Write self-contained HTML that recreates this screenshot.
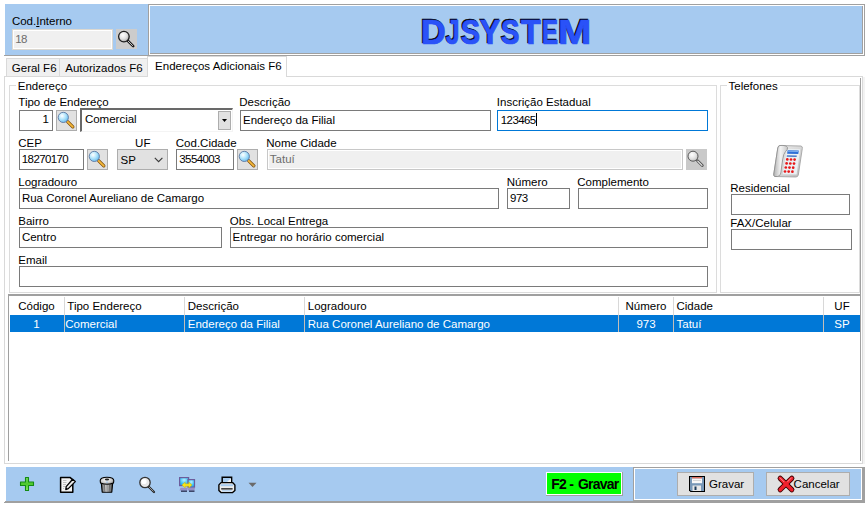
<!DOCTYPE html>
<html><head><meta charset="utf-8"><style>
html,body{margin:0;padding:0;width:868px;height:508px;overflow:hidden;background:#fff;position:relative}
body div{position:absolute;box-sizing:border-box}
svg{position:absolute}
.t{white-space:nowrap;font-family:"Liberation Sans",sans-serif;color:#000;}
</style></head><body>
<div style="left:5px;top:4px;width:143px;height:51px;background:#a6caf0"></div>
<div style="left:4px;top:55px;width:861px;height:1px;background:#a0a0a0"></div>
<div style="left:148px;top:4px;width:717px;height:52px;border:1px solid #a0a0a0;box-sizing:border-box;background:#fff"></div>
<div style="left:149px;top:5px;width:714px;height:49px;border:1px solid #fff;border-right:0;border-bottom:0;box-sizing:border-box"></div>
<div style="left:150px;top:6px;width:713px;height:48px;background:#a6caf0;border-right:1px solid #a0a0a0;border-bottom:1px solid #a0a0a0;box-sizing:border-box"></div>
<div class="t" style="left:11.90px;top:14px;font-size:11.5px;line-height:14px;">Cod.<span style="text-decoration:underline">I</span>nterno</div>
<div style="left:12px;top:29px;width:101px;height:21px;background:#f0f0f0;border:1px solid #dcd8d0;box-shadow:inset 0 0 0 1px #fff;box-sizing:border-box"></div>
<div class="t" style="left:15.30px;top:32px;font-size:11.5px;line-height:14px;color:#6d6d6d;letter-spacing:-0.6px">18</div>
<div style="left:116px;top:29px;width:21px;height:20px;background:#cccccc;"><div style="left:0;top:0"><svg width="21" height="21" viewBox="0 0 21 21"><defs><radialGradient id="gg" cx="0.4" cy="0.35" r="0.75"><stop offset="0" stop-color="#ffffff"/><stop offset="0.5" stop-color="#e0e0e0"/><stop offset="1" stop-color="#9a9a9a"/></radialGradient></defs><line x1="11.5" y1="11.5" x2="17.2" y2="17.2" stroke="#1a1a1a" stroke-width="2.6" stroke-linecap="round"/><line x1="12" y1="12" x2="16.6" y2="16.6" stroke="#d8d8d8" stroke-width="0.9" stroke-linecap="round"/><circle cx="7.9" cy="7.6" r="5.3" fill="url(#gg)" stroke="#1e1e1e" stroke-width="1.3"/></svg></div></div>
<div class="t" style="left:420.04px;top:11px;font-size:35px;line-height:40px;font-weight:bold;color:#000;-webkit-text-stroke:0.7px #000;transform:scaleX(0.982);transform-origin:0 0">D</div>
<div class="t" style="left:445.30px;top:11px;font-size:35px;line-height:40px;font-weight:bold;color:#000;-webkit-text-stroke:0.7px #000;transform:scaleX(0.694);transform-origin:0 0">J</div>
<div class="t" style="left:459.78px;top:11px;font-size:35px;line-height:40px;font-weight:bold;color:#000;-webkit-text-stroke:0.7px #000;transform:scaleX(0.819);transform-origin:0 0">S</div>
<div class="t" style="left:479.20px;top:11px;font-size:35px;line-height:40px;font-weight:bold;color:#000;-webkit-text-stroke:0.7px #000;transform:scaleX(0.870);transform-origin:0 0">Y</div>
<div class="t" style="left:500.20px;top:11px;font-size:35px;line-height:40px;font-weight:bold;color:#000;-webkit-text-stroke:0.7px #000;transform:scaleX(0.795);transform-origin:0 0">S</div>
<div class="t" style="left:519.50px;top:11px;font-size:35px;line-height:40px;font-weight:bold;color:#000;-webkit-text-stroke:0.7px #000;transform:scaleX(0.929);transform-origin:0 0">T</div>
<div class="t" style="left:540.72px;top:11px;font-size:35px;line-height:40px;font-weight:bold;color:#000;-webkit-text-stroke:0.7px #000;transform:scaleX(0.690);transform-origin:0 0">E</div>
<div class="t" style="left:556.81px;top:11px;font-size:35px;line-height:40px;font-weight:bold;color:#000;-webkit-text-stroke:0.7px #000;transform:scaleX(1.144);transform-origin:0 0">M</div>
<div class="t" style="left:421.04px;top:12px;font-size:35px;line-height:40px;font-weight:bold;color:#2a52f8;-webkit-text-stroke:0.7px #2a52f8;transform:scaleX(0.982);transform-origin:0 0">D</div>
<div class="t" style="left:446.30px;top:12px;font-size:35px;line-height:40px;font-weight:bold;color:#2a52f8;-webkit-text-stroke:0.7px #2a52f8;transform:scaleX(0.694);transform-origin:0 0">J</div>
<div class="t" style="left:460.78px;top:12px;font-size:35px;line-height:40px;font-weight:bold;color:#2a52f8;-webkit-text-stroke:0.7px #2a52f8;transform:scaleX(0.819);transform-origin:0 0">S</div>
<div class="t" style="left:480.20px;top:12px;font-size:35px;line-height:40px;font-weight:bold;color:#2a52f8;-webkit-text-stroke:0.7px #2a52f8;transform:scaleX(0.870);transform-origin:0 0">Y</div>
<div class="t" style="left:501.20px;top:12px;font-size:35px;line-height:40px;font-weight:bold;color:#2a52f8;-webkit-text-stroke:0.7px #2a52f8;transform:scaleX(0.795);transform-origin:0 0">S</div>
<div class="t" style="left:520.50px;top:12px;font-size:35px;line-height:40px;font-weight:bold;color:#2a52f8;-webkit-text-stroke:0.7px #2a52f8;transform:scaleX(0.929);transform-origin:0 0">T</div>
<div class="t" style="left:541.72px;top:12px;font-size:35px;line-height:40px;font-weight:bold;color:#2a52f8;-webkit-text-stroke:0.7px #2a52f8;transform:scaleX(0.690);transform-origin:0 0">E</div>
<div class="t" style="left:557.81px;top:12px;font-size:35px;line-height:40px;font-weight:bold;color:#2a52f8;-webkit-text-stroke:0.7px #2a52f8;transform:scaleX(1.144);transform-origin:0 0">M</div>
<div style="left:4px;top:76px;width:859px;height:388px;border:1px solid #d9d9d9;box-sizing:border-box;background:#fff"></div>
<div style="left:863px;top:77px;width:2px;height:387px;background:#f3f3f3"></div>
<div style="left:6px;top:58px;width:54px;height:19px;background:#f0f0f0;border:1px solid #d9d9d9;box-sizing:border-box"></div>
<div style="left:59px;top:58px;width:89px;height:19px;background:#f0f0f0;border:1px solid #d9d9d9;box-sizing:border-box"></div>
<div style="left:147px;top:56px;width:140px;height:21px;background:#fff;border:1px solid #d9d9d9;border-bottom:0;box-sizing:border-box"></div>
<div class="t" style="left:11.80px;top:61px;font-size:11.5px;line-height:14px;">Geral F6</div>
<div class="t" style="left:65.30px;top:61px;font-size:11.5px;line-height:14px;">Autorizados F6</div>
<div class="t" style="left:155.10px;top:59px;font-size:11.5px;line-height:14px;">Endereços Adicionais F6</div>
<div style="left:9px;top:85px;width:708px;height:208px;border:1px solid #dcdcdc;box-sizing:border-box"></div>
<div class="t" style="left:15.80px;top:79px;font-size:11.5px;line-height:14px;background:#fff;padding:0 2px">Endereço</div>
<div style="left:720px;top:85px;width:140px;height:208px;border:1px solid #dcdcdc;box-sizing:border-box"></div>
<div class="t" style="left:726.50px;top:79px;font-size:11.5px;line-height:14px;background:#fff;padding:0 2px">Telefones</div>
<div style="left:860px;top:78px;width:1px;height:383px;background:#a0a0a0"></div>
<div class="t" style="left:18.30px;top:95px;font-size:11.5px;line-height:14px;">Tipo de Endereço</div>
<div class="t" style="left:239.30px;top:95px;font-size:11.5px;line-height:14px;">Descrição</div>
<div class="t" style="left:496.80px;top:95px;font-size:11.5px;line-height:14px;">Inscrição Estadual</div>
<div style="left:19px;top:110px;width:34px;height:21px;border:1px solid #7a7a7a;background:#fff;"></div>
<div class="t" style="right:819px;top:112px;font-size:11.5px;line-height:14px;">1</div>
<div style="left:56px;top:110px;width:21px;height:21px;background:#e1e1e1;border:1px solid #adadad;box-sizing:border-box"><div style="left:-1px;top:-1px"><svg width="21" height="21" viewBox="0 0 21 21"><defs><radialGradient id="gl1" cx="0.38" cy="0.35" r="0.75"><stop offset="0" stop-color="#ffffff"/><stop offset="0.45" stop-color="#b4e6fc"/><stop offset="1" stop-color="#5ab4ec"/></radialGradient></defs><line x1="11.8" y1="11.8" x2="16.8" y2="16.8" stroke="#7a4a08" stroke-width="3.3" stroke-linecap="round"/><line x1="11.8" y1="11.8" x2="16.8" y2="16.8" stroke="#f4b83a" stroke-width="1.9" stroke-linecap="round"/><circle cx="7.3" cy="7.4" r="5.1" fill="url(#gl1)" stroke="#5a76a0" stroke-width="0.9"/></svg></div></div>
<div style="left:80px;top:108px;width:153px;height:24px;border-top:2px solid #696969;border-left:2px solid #696969;border-right:1px solid #f4f4f4;border-bottom:1px solid #f4f4f4;box-sizing:border-box;background:#fff"></div>
<div class="t" style="left:84.90px;top:112px;font-size:11.5px;line-height:14px;">Comercial</div>
<div style="left:218px;top:111px;width:13px;height:19px;background:#e1e1e1;border:1px solid #adadad;box-sizing:border-box"></div>
<svg style="position:absolute;left:222px;top:119px" width="5" height="3" viewBox="0 0 5 3"><path d="M0 0 L5 0 L2.5 3 Z" fill="#000"/></svg>
<div style="left:240px;top:110px;width:251px;height:21px;border:1px solid #7a7a7a;background:#fff;"></div>
<div class="t" style="left:243.00px;top:113px;font-size:11.5px;line-height:14px;">Endereço da Filial</div>
<div style="left:497px;top:110px;width:211px;height:21px;border:1px solid #7a7a7a;background:#fff;border-color:#0078d7"></div>
<div class="t" style="left:500.80px;top:113px;font-size:11.5px;line-height:14px;letter-spacing:-0.6px">123465</div>
<div style="left:536px;top:113px;width:1px;height:13px;background:#000"></div>
<div class="t" style="left:18.30px;top:136px;font-size:11.5px;line-height:14px;">CEP</div>
<div class="t" style="left:135.10px;top:136px;font-size:11.5px;line-height:14px;">UF</div>
<div class="t" style="left:175.80px;top:136px;font-size:11.5px;line-height:14px;">Cod.Cidade</div>
<div class="t" style="left:266.30px;top:136px;font-size:11.5px;line-height:14px;">Nome Cidade</div>
<div style="left:19px;top:149px;width:65px;height:21px;border:1px solid #7a7a7a;background:#fff;"></div>
<div class="t" style="left:21.80px;top:152px;font-size:11.5px;line-height:14px;letter-spacing:-0.6px">18270170</div>
<div style="left:87px;top:149px;width:21px;height:21px;background:#e1e1e1;border:1px solid #adadad;box-sizing:border-box"><div style="left:-1px;top:-1px"><svg width="21" height="21" viewBox="0 0 21 21"><defs><radialGradient id="gl2" cx="0.38" cy="0.35" r="0.75"><stop offset="0" stop-color="#ffffff"/><stop offset="0.45" stop-color="#b4e6fc"/><stop offset="1" stop-color="#5ab4ec"/></radialGradient></defs><line x1="11.8" y1="11.8" x2="16.8" y2="16.8" stroke="#7a4a08" stroke-width="3.3" stroke-linecap="round"/><line x1="11.8" y1="11.8" x2="16.8" y2="16.8" stroke="#f4b83a" stroke-width="1.9" stroke-linecap="round"/><circle cx="7.3" cy="7.4" r="5.1" fill="url(#gl2)" stroke="#5a76a0" stroke-width="0.9"/></svg></div></div>
<div style="left:117px;top:149px;width:51px;height:21px;background:#e1e1e1;border:1px solid #adadad;box-sizing:border-box"></div>
<div class="t" style="left:120.60px;top:153px;font-size:11.5px;line-height:14px;">SP</div>
<svg style="position:absolute;left:154px;top:157px" width="10" height="6" viewBox="0 0 10 6"><path d="M0.8 0.8 L4.6 4.6 L8.4 0.8" fill="none" stroke="#3a3a3a" stroke-width="1.15"/></svg>
<div style="left:176px;top:149px;width:58px;height:21px;border:1px solid #7a7a7a;background:#fff;"></div>
<div class="t" style="left:179.30px;top:152px;font-size:11.5px;line-height:14px;letter-spacing:-0.6px">3554003</div>
<div style="left:237px;top:149px;width:21px;height:21px;background:#e1e1e1;border:1px solid #adadad;box-sizing:border-box"><div style="left:-1px;top:-1px"><svg width="21" height="21" viewBox="0 0 21 21"><defs><radialGradient id="gl3" cx="0.38" cy="0.35" r="0.75"><stop offset="0" stop-color="#ffffff"/><stop offset="0.45" stop-color="#b4e6fc"/><stop offset="1" stop-color="#5ab4ec"/></radialGradient></defs><line x1="11.8" y1="11.8" x2="16.8" y2="16.8" stroke="#7a4a08" stroke-width="3.3" stroke-linecap="round"/><line x1="11.8" y1="11.8" x2="16.8" y2="16.8" stroke="#f4b83a" stroke-width="1.9" stroke-linecap="round"/><circle cx="7.3" cy="7.4" r="5.1" fill="url(#gl3)" stroke="#5a76a0" stroke-width="0.9"/></svg></div></div>
<div style="left:267px;top:149px;width:416px;height:21px;background:#f0f0f0;border:1px solid #c8c8c8;box-shadow:inset 0 0 0 1px #fff;box-sizing:border-box"></div>
<div class="t" style="left:269.80px;top:152px;font-size:11.5px;line-height:14px;color:#6d6d6d">Tatuí</div>
<div style="left:686px;top:149px;width:21px;height:21px;background:#c9c9c9;"><div style="left:0;top:0"><svg width="21" height="21" viewBox="0 0 21 21"><defs><radialGradient id="gd" cx="0.4" cy="0.35" r="0.75"><stop offset="0" stop-color="#ffffff"/><stop offset="0.5" stop-color="#e4e4e4"/><stop offset="1" stop-color="#b8b8b8"/></radialGradient></defs><line x1="11.5" y1="11.8" x2="16.3" y2="16.6" stroke="#505050" stroke-width="2.8" stroke-linecap="round"/><line x1="11.8" y1="12.1" x2="16" y2="16.3" stroke="#e8e8e8" stroke-width="1.2" stroke-linecap="round"/><circle cx="7" cy="7.2" r="5" fill="url(#gd)" stroke="#585858" stroke-width="1"/></svg></div></div>
<div class="t" style="left:18.30px;top:175px;font-size:11.5px;line-height:14px;">Logradouro</div>
<div class="t" style="left:506.80px;top:175px;font-size:11.5px;line-height:14px;">Número</div>
<div class="t" style="left:577.30px;top:175px;font-size:11.5px;line-height:14px;">Complemento</div>
<div style="left:19px;top:188px;width:480px;height:21px;border:1px solid #7a7a7a;background:#fff;"></div>
<div class="t" style="left:21.90px;top:191px;font-size:11.5px;line-height:14px;">Rua Coronel Aureliano de Camargo</div>
<div style="left:507px;top:188px;width:63px;height:21px;border:1px solid #7a7a7a;background:#fff;"></div>
<div class="t" style="left:510.10px;top:191px;font-size:11.5px;line-height:14px;letter-spacing:-0.6px">973</div>
<div style="left:578px;top:188px;width:130px;height:21px;border:1px solid #7a7a7a;background:#fff;"></div>
<div class="t" style="left:18.30px;top:214px;font-size:11.5px;line-height:14px;">Bairro</div>
<div class="t" style="left:229.80px;top:214px;font-size:11.5px;line-height:14px;">Obs. Local Entrega</div>
<div style="left:19px;top:227px;width:203px;height:21px;border:1px solid #7a7a7a;background:#fff;"></div>
<div class="t" style="left:21.90px;top:230px;font-size:11.5px;line-height:14px;">Centro</div>
<div style="left:230px;top:227px;width:478px;height:21px;border:1px solid #7a7a7a;background:#fff;"></div>
<div class="t" style="left:232.60px;top:230px;font-size:11.5px;line-height:14px;">Entregar no horário comercial</div>
<div class="t" style="left:18.30px;top:253px;font-size:11.5px;line-height:14px;">Email</div>
<div style="left:19px;top:266px;width:689px;height:21px;border:1px solid #7a7a7a;background:#fff;"></div>
<div class="t" style="left:730.30px;top:181px;font-size:11.5px;line-height:14px;">Residencial</div>
<div style="left:731px;top:194px;width:119px;height:21px;border:1px solid #7a7a7a;background:#fff;"></div>
<div class="t" style="left:730.30px;top:216px;font-size:11.5px;line-height:14px;">FAX/Celular</div>
<div style="left:731px;top:229px;width:121px;height:21px;border:1px solid #7a7a7a;background:#fff;"></div>
<svg style="position:absolute;left:770px;top:140px" width="36" height="40" viewBox="0 0 36 40">
<defs><linearGradient id="pg" x1="0" y1="0" x2="1" y2="1"><stop offset="0" stop-color="#f2f2f2"/><stop offset="1" stop-color="#bcbcbc"/></linearGradient>
<linearGradient id="hg" x1="0" y1="0" x2="1" y2="0"><stop offset="0" stop-color="#b0b0b0"/><stop offset="0.5" stop-color="#f4f4f4"/><stop offset="1" stop-color="#c8c8c8"/></linearGradient></defs>
<path d="M10 5.5 L31 6 Q32.8 6.5 32.3 8.5 L28.3 35 Q27.8 37 25.8 37 L5 36.5 Q3.3 36 3.8 34 L7.8 8 Q8.3 5.5 10 5.5 Z" fill="url(#pg)" stroke="#9c9c9c" stroke-width="0.8"/>
<path d="M17 9 L30.2 9.2 L26.6 34.5 L12.6 34.3 Z" fill="#eaf0f4"/>
<path d="M10 5.5 Q16.5 5 17.5 7.5 Q18 9.5 15.5 11.5 Q13.5 13.5 12.6 20 L10.8 33 Q10.3 36.3 7.5 36.5 L5 36.5 Q3.3 36 3.8 34 L7.8 8 Q8.3 5.5 10 5.5 Z" fill="url(#hg)" stroke="#8c8c8c" stroke-width="0.8"/>
<path d="M17.6 10.3 L28.8 10.5 L28.3 14 L17.1 13.8 Z" fill="#2f6fd6"/>
<path d="M18 10.8 L28.2 11 L28 12 L17.9 11.8 Z" fill="#7fb0f0"/>
<path d="M16.9 15.2 L26.8 15.4 L26.6 16.9 L16.7 16.7 Z" fill="#4a78c8"/>
<g fill="#e81818">
<circle cx="17.3" cy="19.4" r="1.35"/><circle cx="21" cy="19.5" r="1.35"/><circle cx="24.6" cy="19.6" r="1.35"/>
<circle cx="16.6" cy="23.4" r="1.35"/><circle cx="20.3" cy="23.5" r="1.35"/><circle cx="24" cy="23.6" r="1.35"/>
<circle cx="15.8" cy="27.5" r="1.35"/><circle cx="19.5" cy="27.6" r="1.35"/><circle cx="23.2" cy="27.7" r="1.35"/>
<circle cx="15" cy="31.5" r="1.35"/><circle cx="18.7" cy="31.6" r="1.35"/><circle cx="22.4" cy="31.7" r="1.35"/>
</g></svg>
<div style="left:8px;top:294px;width:853px;height:167px;border-top:2px solid #a0a0a0;border-left:1px solid #a0a0a0;border-right:1px solid #a0a0a0;box-sizing:border-box;background:#fff"></div>
<div style="left:10px;top:315px;width:850px;height:17px;background:#0078d7"></div>
<div style="left:64px;top:297px;width:1px;height:18px;background:#d8d8d8"></div>
<div style="left:64px;top:315px;width:1px;height:17px;background:#c4beb8"></div>
<div style="left:184px;top:297px;width:1px;height:18px;background:#d8d8d8"></div>
<div style="left:184px;top:315px;width:1px;height:17px;background:#c4beb8"></div>
<div style="left:304px;top:297px;width:1px;height:18px;background:#d8d8d8"></div>
<div style="left:304px;top:315px;width:1px;height:17px;background:#c4beb8"></div>
<div style="left:618px;top:297px;width:1px;height:18px;background:#d8d8d8"></div>
<div style="left:618px;top:315px;width:1px;height:17px;background:#c4beb8"></div>
<div style="left:673px;top:297px;width:1px;height:18px;background:#d8d8d8"></div>
<div style="left:673px;top:315px;width:1px;height:17px;background:#c4beb8"></div>
<div style="left:823px;top:297px;width:1px;height:18px;background:#d8d8d8"></div>
<div style="left:823px;top:315px;width:1px;height:17px;background:#c4beb8"></div>
<div class="t" style="left:9px;width:55px;text-align:center;top:299px;font-size:11.5px;line-height:14px;">Código</div>
<div class="t" style="left:67.30px;top:299px;font-size:11.5px;line-height:14px;">Tipo Endereço</div>
<div class="t" style="left:187.80px;top:299px;font-size:11.5px;line-height:14px;">Descrição</div>
<div class="t" style="left:307.80px;top:299px;font-size:11.5px;line-height:14px;">Logradouro</div>
<div class="t" style="left:619px;width:54px;text-align:center;top:299px;font-size:11.5px;line-height:14px;">Número</div>
<div class="t" style="left:676.50px;top:299px;font-size:11.5px;line-height:14px;">Cidade</div>
<div class="t" style="left:824px;width:36px;text-align:center;top:299px;font-size:11.5px;line-height:14px;">UF</div>
<div class="t" style="left:9px;width:55px;text-align:center;top:317px;font-size:11.5px;line-height:14px;color:#fff">1</div>
<div class="t" style="left:65.30px;top:317px;font-size:11.5px;line-height:14px;color:#fff">Comercial</div>
<div class="t" style="left:187.80px;top:317px;font-size:11.5px;line-height:14px;color:#fff">Endereço da Filial</div>
<div class="t" style="left:307.80px;top:317px;font-size:11.5px;line-height:14px;color:#fff">Rua Coronel Aureliano de Camargo</div>
<div class="t" style="left:619px;width:54px;text-align:center;top:317px;font-size:11.5px;line-height:14px;color:#fff">973</div>
<div class="t" style="left:676.50px;top:317px;font-size:11.5px;line-height:14px;color:#fff">Tatuí</div>
<div class="t" style="left:824px;width:36px;text-align:center;top:317px;font-size:11.5px;line-height:14px;color:#fff">SP</div>
<div style="left:6px;top:467px;width:627px;height:34px;background:#a6caf0"></div>
<div style="left:5px;top:501px;width:628px;height:1px;background:#a0a0a0"></div>
<div style="left:4px;top:502px;width:629px;height:1px;background:#a0a0a0"></div>
<div style="left:633px;top:467px;width:232px;height:36px;background:#a0a0a0"></div>
<div style="left:634px;top:468px;width:228px;height:32px;background:#fff"></div>
<div style="left:635px;top:469px;width:226px;height:30px;background:#a6caf0"></div>
<div style="left:546px;top:472px;width:77px;height:24px;background:#a0a0a0"></div>
<div style="left:546px;top:472px;width:76px;height:23px;background:#fff"></div>
<div style="left:547px;top:473px;width:74px;height:21px;background:#00ff00"></div>
<div class="t" style="left:551.30px;top:476px;font-size:14px;line-height:16px;font-weight:bold;letter-spacing:-0.8px">F2</div>
<div class="t" style="left:569.30px;top:476px;font-size:14px;line-height:16px;font-weight:bold;letter-spacing:-0.8px">-</div>
<div class="t" style="left:578.00px;top:476px;font-size:14px;line-height:16px;font-weight:bold;letter-spacing:-0.8px">Gravar</div>
<div style="left:677px;top:472px;width:77px;height:24px;background:#e1e1e1;border:1px solid #adadad;box-sizing:border-box"></div>
<div class="t" style="left:709.00px;top:477px;font-size:11.5px;line-height:14px;">Gravar</div>
<div style="left:766px;top:472px;width:84px;height:24px;background:#e1e1e1;border:1px solid #adadad;box-sizing:border-box"></div>
<div class="t" style="left:793.60px;top:477px;font-size:11.5px;line-height:14px;">Cancelar</div>
<svg style="position:absolute;left:688px;top:475px" width="18" height="18" viewBox="0 0 18 18">
<path d="M1 1 L17 1 L17 17 L2.5 17 L1 15.5 Z" fill="#000"/>
<path d="M2 2 L16 2 L16 16 L3 16 L2 15 Z" fill="#7898b8"/>
<rect x="4" y="2" width="10" height="1.6" fill="#e07060"/>
<rect x="4" y="3.6" width="10" height="4.6" fill="#f8f8f8"/>
<rect x="5" y="5.2" width="8" height="0.6" fill="#c0c0c0"/>
<rect x="4.5" y="10.5" width="8.5" height="5.5" fill="#e8e8e8"/>
<rect x="6.5" y="11.5" width="2" height="3.5" fill="#1a3a5a"/>
</svg>
<svg style="position:absolute;left:776px;top:474px" width="20" height="20" viewBox="0 0 20 20">
<g stroke-linecap="round">
<line x1="4.2" y1="4.3" x2="15.8" y2="15.7" stroke="#3a0000" stroke-width="5.2"/>
<line x1="15.8" y1="4.3" x2="4.2" y2="15.7" stroke="#3a0000" stroke-width="5.2"/>
<line x1="4.2" y1="4.3" x2="15.8" y2="15.7" stroke="#f0202c" stroke-width="3.4"/>
<line x1="15.8" y1="4.3" x2="4.2" y2="15.7" stroke="#f0202c" stroke-width="3.4"/>
<line x1="4" y1="3.8" x2="8" y2="7.8" stroke="#ff8a90" stroke-width="1"/>
<line x1="15.5" y1="3.8" x2="11.8" y2="7.5" stroke="#ff8a90" stroke-width="1"/>
</g></svg>
<svg style="position:absolute;left:19px;top:476px" width="16" height="16" viewBox="0 0 16 16">
<defs><linearGradient id="plg" x1="0" y1="0" x2="0" y2="1"><stop offset="0" stop-color="#7ad860"/><stop offset="0.5" stop-color="#4cc82c"/><stop offset="1" stop-color="#8af060"/></linearGradient></defs>
<path d="M6.5 1.5 L9.5 1.5 L9.5 6 L14.5 6 L14.5 9.5 L9.5 9.5 L9.5 14.5 L6.5 14.5 L6.5 9.5 L1.5 9.5 L1.5 6 L6.5 6 Z" fill="url(#plg)" stroke="#148a14" stroke-width="1.1" stroke-linejoin="round"/>
</svg>
<svg style="position:absolute;left:59px;top:476px" width="18" height="18" viewBox="0 0 18 18">
<path d="M1.6 1.6 L11.3 1.6 L13.8 4 L13.8 16.3 L1.6 16.3 Z" fill="#f2f2f2" stroke="#000" stroke-width="1.5" stroke-linejoin="round"/>
<g stroke="#b0b0b0" stroke-width="0.8"><line x1="4" y1="4.5" x2="7.5" y2="4.5"/><line x1="4" y1="6.5" x2="7.5" y2="6.5"/><line x1="4" y1="8.5" x2="7" y2="8.5"/><line x1="4" y1="10.5" x2="6.5" y2="10.5"/><line x1="4" y1="12.5" x2="5" y2="12.5"/></g>
<path d="M13.6 3.2 L16.3 5.6 L9.3 12.6 L6.8 13.6 L7.2 10.6 Z" fill="#d8d8d8" stroke="#000" stroke-width="1.3" stroke-linejoin="round"/>
<line x1="8.6" y1="11.2" x2="14.6" y2="5" stroke="#f8f8f8" stroke-width="0.9"/>
</svg>
<svg style="position:absolute;left:99px;top:476px" width="16" height="18" viewBox="0 0 16 18">
<defs><linearGradient id="tbg" x1="0" y1="0" x2="1" y2="0"><stop offset="0" stop-color="#505050"/><stop offset="0.45" stop-color="#e8e8e8"/><stop offset="1" stop-color="#404040"/></linearGradient>
<radialGradient id="tlg" cx="0.45" cy="0.4" r="0.7"><stop offset="0" stop-color="#ffffff"/><stop offset="0.6" stop-color="#c8c8c8"/><stop offset="1" stop-color="#606060"/></radialGradient></defs>
<path d="M2.3 7 L13.7 7 L12.8 16.3 L3.2 16.3 Z" fill="url(#tbg)" stroke="#000" stroke-width="1.1" stroke-linejoin="round"/>
<g stroke="#555" stroke-width="0.8"><line x1="5.6" y1="9" x2="5.9" y2="15.5"/><line x1="8" y1="9" x2="8" y2="15.5"/><line x1="10.4" y1="9" x2="10.1" y2="15.5"/></g>
<path d="M1.2 4.8 Q1.2 1.2 8 1.2 Q14.8 1.2 14.8 4.8 L14.5 7 Q8 9.5 1.5 7 Z" fill="url(#tlg)" stroke="#000" stroke-width="1.1" stroke-linejoin="round"/>
<ellipse cx="8" cy="3.6" rx="2.2" ry="1" fill="#222"/>
<circle cx="8" cy="6" r="0.6" fill="#4aa0ff"/>
</svg>
<svg style="position:absolute;left:138px;top:476px" width="18" height="18" viewBox="0 0 18 18">
<line x1="10.5" y1="10.5" x2="16" y2="16" stroke="#222" stroke-width="2.2" stroke-linecap="round"/>
<line x1="11" y1="11" x2="15.5" y2="15.5" stroke="#ccc" stroke-width="0.7"/>
<circle cx="7" cy="6.5" r="5.2" fill="#e8e8e8" stroke="#333" stroke-width="1.3"/>
<circle cx="6" cy="5.5" r="2.6" fill="#fff"/>
</svg>
<svg style="position:absolute;left:178px;top:476px" width="18" height="17" viewBox="0 0 18 17">
<defs><radialGradient id="scg" cx="0.5" cy="0.3" r="0.8"><stop offset="0" stop-color="#b8f0ff"/><stop offset="0.6" stop-color="#38c0f8"/><stop offset="1" stop-color="#2090e0"/></radialGradient></defs>
<rect x="1.6" y="1.6" width="9" height="8" fill="url(#scg)" stroke="#6c5c9c" stroke-width="1.2"/>
<rect x="10" y="3.6" width="6.5" height="7.6" fill="url(#scg)" stroke="#6c5c9c" stroke-width="1.2"/>
<path d="M2.5 11.8 L10 11.8 L9 14.5 L1.5 14.5 Z" fill="#9890c8"/>
<path d="M10.5 11.8 L17 11.8 L16.5 14.5 L9.5 14.5 Z" fill="#9890c8"/>
<rect x="3" y="14.6" width="6" height="1.1" fill="#101030"/>
<rect x="11" y="14.6" width="5.5" height="1.1" fill="#101030"/>
<path d="M3.9 9 L7.2 6 L7.2 7.8 L10.8 7.8 L10.8 6 L14.1 9 L10.8 12 L10.8 10.2 L7.2 10.2 L7.2 12 Z" fill="#f8e418" stroke="#c8a800" stroke-width="0.4"/>
</svg>
<svg style="position:absolute;left:218px;top:476px" width="18" height="18" viewBox="0 0 18 18">
<path d="M4.2 1.3 L13.6 1.3 L13.6 7 L4.2 7 Z" fill="#a8ccf0" stroke="#000" stroke-width="1.5"/>
<path d="M8.5 6.5 L13 2.2 L13 6.5 Z" fill="#f4f4f4"/>
<path d="M3 6.6 L14.6 6.6 L16.9 8.9 L16.9 14.4 L14.6 16.6 L3 16.6 L0.9 14.4 L0.9 8.9 Z" fill="#ececec" stroke="#000" stroke-width="1.4" stroke-linejoin="round"/>
<rect x="2.6" y="8.2" width="12.6" height="2" fill="#a8ccf0"/>
<rect x="3.2" y="12.2" width="11.4" height="1.3" fill="#1a1a1a"/>
<rect x="4" y="14" width="9.8" height="1.6" fill="#b8d4f0"/>
</svg>
<svg style="position:absolute;left:248px;top:482px" width="9" height="6" viewBox="0 0 9 6"><path d="M0.5 0.8 L8.5 0.8 L4.5 5 Z" fill="#6a6a6a"/></svg>
</body></html>
